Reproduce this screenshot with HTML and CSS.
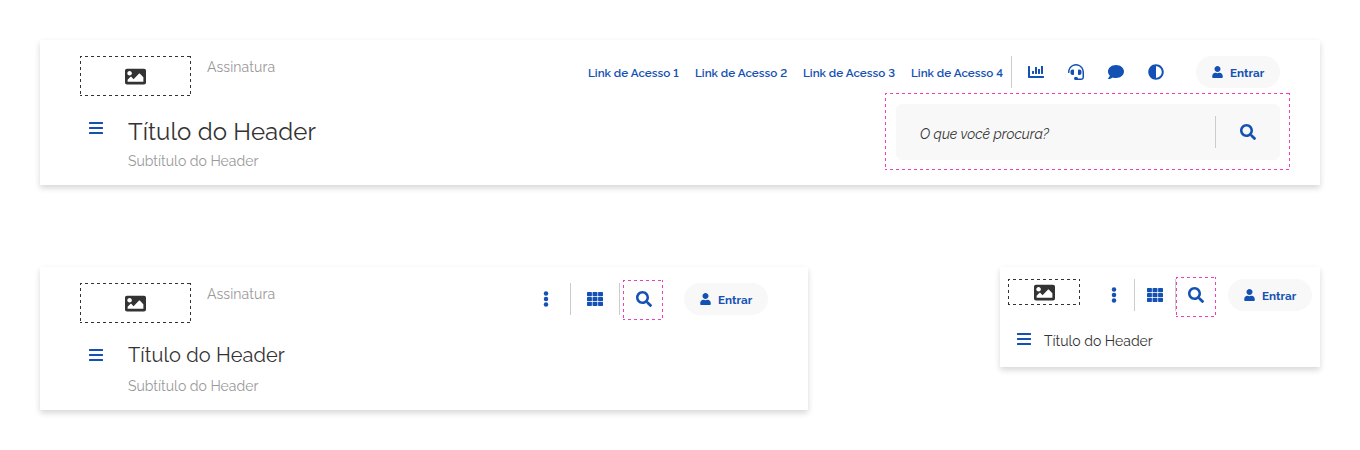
FILE: index.html
```html
<!DOCTYPE html>
<html lang="pt-BR">
<head>
<meta charset="utf-8">
<title>Header</title>
<link rel="stylesheet" href="styles.css">
</head>
<body>
<svg class="sprite" aria-hidden="true">
<symbol id="image" viewBox="0 0 512 512"><path d="M464 448H48c-26.510 0-48-21.490-48-48V112c0-26.510 21.490-48 48-48h416c26.510 0 48 21.490 48 48v288c0 26.510-21.490 48-48 48zM112 120c-30.928 0-56 25.072-56 56s25.072 56 56 56 56-25.072 56-56-25.072-56-56-56zM64 384h384V272l-87.515-87.515c-4.686-4.686-12.284-4.686-16.971 0L208 320l-55.515-55.515c-4.686-4.686-12.284-4.686-16.971 0L64 336v48z"/></symbol>
<symbol id="search" viewBox="0 0 512 512"><path d="M505 442.700L405.300 343c-4.500-4.500-10.600-7-17-7H372c27.600-35.300 44-79.700 44-128C416 93.100 322.900 0 208 0S0 93.100 0 208s93.100 208 208 208c48.300 0 92.700-16.400 128-44v16.300c0 6.400 2.500 12.500 7 17l99.700 99.700c9.400 9.400 24.600 9.400 33.900 0l28.300-28.300c9.400-9.400 9.400-24.600.1-34zM208 336c-70.700 0-128-57.200-128-128 0-70.700 57.200-128 128-128 70.700 0 128 57.200 128 128 0 70.700-57.200 128-128 128z"/></symbol>
<symbol id="user" viewBox="0 0 448 512"><path d="M224 256c70.700 0 128-57.300 128-128S294.700 0 224 0 96 57.300 96 128s57.300 128 128 128zm89.600 32h-16.700c-22.200 10.200-46.900 16-72.900 16s-50.600-5.800-72.900-16h-16.700C60.200 288 0 348.200 0 422.400V464c0 26.500 21.500 48 48 48h352c26.500 0 48-21.500 48-48v-41.600c0-74.200-60.200-134.400-134.400-134.400z"/></symbol>
<symbol id="comment" viewBox="0 0 512 512"><path d="M256 32C114.600 32 0 125.100 0 240c0 49.600 21.400 95 57 130.700C44.500 421.100 2.700 466 2.200 466.500c-2.200 2.300-2.800 5.700-1.500 8.700S4.800 480 8 480c66.300 0 116-31.800 140.600-51.400 32.700 12.300 69 19.400 107.400 19.400 141.400 0 256-93.100 256-208S397.400 32 256 32z"/></symbol>
<symbol id="contrast" viewBox="0 0 512 512"><path d="M8 256c0 136.966 111.033 248 248 248s248-111.034 248-248S392.966 8 256 8 8 119.033 8 256zm248 184V72c101.705 0 184 82.311 184 184 0 101.705-82.311 184-184 184z"/></symbol>
<symbol id="headset" viewBox="0 0 512 512"><path d="M192 208c0-17.670-14.330-32-32-32h-16c-35.350 0-64 28.650-64 64v48c0 35.350 28.650 64 64 64h16c17.670 0 32-14.330 32-32V208zm176 144c35.350 0 64-28.650 64-64v-48c0-35.350-28.650-64-64-64h-16c-17.670 0-32 14.330-32 32v112c0 17.670 14.330 32 32 32h16zM256 0C113.180 0 4.580 118.830 0 256v16c0 8.840 7.160 16 16 16h16c8.840 0 16-7.160 16-16v-16c0-114.690 93.310-208 208-208s208 93.310 208 208h-.12c.08 2.430.12 165.720.12 165.720 0 23.350-18.930 42.280-42.280 42.280H320c0-26.510-21.490-48-48-48h-32c-26.510 0-48 21.490-48 48s21.490 48 48 48h181.720c49.860 0 90.280-40.420 90.280-90.280V256C507.420 118.830 398.820 0 256 0z"/></symbol>
<symbol id="chart" viewBox="0 0 512 512"><path d="M332.800 320h38.400c6.400 0 12.800-6.400 12.800-12.800V172.800c0-6.400-6.400-12.800-12.800-12.800h-38.400c-6.400 0-12.800 6.400-12.800 12.800v134.400c0 6.400 6.400 12.800 12.800 12.800zm96 0h38.400c6.400 0 12.800-6.400 12.800-12.800V76.800c0-6.400-6.400-12.800-12.800-12.800h-38.400c-6.400 0-12.800 6.400-12.800 12.800v230.400c0 6.400 6.400 12.800 12.800 12.800zm-288 0h38.400c6.400 0 12.800-6.400 12.800-12.800v-70.400c0-6.400-6.400-12.800-12.800-12.800h-38.400c-6.400 0-12.800 6.400-12.800 12.800v70.400c0 6.400 6.400 12.800 12.800 12.800zm96 0h38.400c6.400 0 12.800-6.400 12.800-12.800V108.800c0-6.400-6.400-12.800-12.800-12.800h-38.400c-6.400 0-12.800 6.400-12.800 12.800v198.400c0 6.400 6.400 12.800 12.800 12.800zM496 384H64V80c0-8.840-7.160-16-16-16H16C7.160 64 0 71.160 0 80v336c0 17.670 14.330 32 32 32h464c8.840 0 16-7.160 16-16v-32c0-8.840-7.160-16-16-16z"/></symbol>
<symbol id="bars" viewBox="0 0 16 16"><path d="M1.500 2h13q.5 0 .5.500v1.100q0 .5-.5.500h-13q-.5 0-.5-.5v-1.100q0-.5.500-.5zm0 5h13q.5 0 .5.500v1.100q0 .5-.5.500h-13q-.5 0-.5-.5V7.500q0-.5.500-.5zm0 5h13q.5 0 .5.500v1.100q0 .5-.5.500h-13q-.5 0-.5-.5v-1.100q0-.5.500-.5z"/></symbol>
<symbol id="dots" viewBox="0 0 16 16"><circle cx="8" cy="2.500" r="2.250"/><circle cx="8" cy="8" r="2.250"/><circle cx="8" cy="13.500" r="2.250"/></symbol>
<symbol id="grid" viewBox="0 0 16 16"><g id="grid-row"><rect x="0" y="1" width="4.900" height="4.200" rx=".7"/><rect x="5.550" y="1" width="4.900" height="4.200" rx=".7"/><rect x="11.100" y="1" width="4.900" height="4.200" rx=".7"/></g><use href="#grid-row" y="4.900"/><use href="#grid-row" y="9.800"/></symbol>
</svg>

<header class="card desktop">
  <div class="brand">
    <div class="brand-top"><div class="logo dashed"><svg class="picture"><use href="#image"/></svg></div><span class="sign">Assinatura</span></div>
    <div class="heading"><button class="menu"><svg class="icon"><use href="#bars"/></svg></button>
      <div><div class="title large">Título do Header</div><div class="subtitle">Subtítulo do Header</div></div></div>
  </div>
  <div class="tools">
    <div class="actions">
      <nav class="links"><a>Link de Acesso 1</a><a>Link de Acesso 2</a><a>Link de Acesso 3</a><a>Link de Acesso 4</a></nav>
      <span class="divider"></span>
      <div class="functions"><svg class="icon"><use href="#chart"/></svg><svg class="icon"><use href="#headset"/></svg><svg class="icon"><use href="#comment"/></svg><svg class="icon"><use href="#contrast"/></svg></div>
      <button class="login"><svg class="person"><use href="#user"/></svg><span>Entrar</span></button>
    </div>
    <div class="search-frame dashed"><div class="search"><span class="placeholder">O que você procura?</span><span class="divider"></span><svg class="icon"><use href="#search"/></svg></div></div>
  </div>
</header>

<div class="row">
  <header class="card tablet">
    <div class="brand">
      <div class="brand-top"><div class="logo dashed"><svg class="picture"><use href="#image"/></svg></div><span class="sign">Assinatura</span></div>
      <div class="heading"><button class="menu"><svg class="icon"><use href="#bars"/></svg></button>
        <div><div class="title medium">Título do Header</div><div class="subtitle">Subtítulo do Header</div></div></div>
    </div>
    <div class="actions">
      <svg class="icon"><use href="#dots"/></svg><span class="divider"></span><svg class="icon"><use href="#grid"/></svg><span class="divider"></span>
      <button class="search-toggle dashed"><svg class="icon"><use href="#search"/></svg></button>
      <button class="login"><svg class="person"><use href="#user"/></svg><span>Entrar</span></button>
    </div>
  </header>

  <header class="card mobile">
    <div class="mobile-top">
      <div class="logo small dashed"><svg class="picture"><use href="#image"/></svg></div>
      <div class="actions">
        <svg class="icon"><use href="#dots"/></svg><span class="divider"></span><svg class="icon"><use href="#grid"/></svg><span class="divider"></span>
        <button class="search-toggle dashed"><svg class="icon"><use href="#search"/></svg></button>
        <button class="login"><svg class="person"><use href="#user"/></svg><span>Entrar</span></button>
      </div>
    </div>
    <div class="heading"><button class="menu"><svg class="icon"><use href="#bars"/></svg></button><div class="title tiny">Título do Header</div></div>
  </header>
</div>
</body>
</html>
```
FILE: styles.css
```css
* { box-sizing: border-box; }
body { margin: 0; padding: 40px; width: 1360px; height: 450px; overflow: hidden; background: #fff; color: #333; font-family: Raleway, Lato, sans-serif; font-variant-numeric: lining-nums; }
button { border: 0; padding: 0; margin: 0; background: none; color: inherit; font: inherit; }
svg { display: block; flex: none; fill: currentColor; }
.sprite { position: absolute; width: 0; height: 0; }
.icon { width: 16px; height: 16px; color: #1351b4; }
.picture { width: 21px; height: 21px; }
.person { width: 11px; height: 12px; margin-bottom: 1px; }
.dashed {
  --dash: #333;
  --across: linear-gradient(90deg, var(--dash) 50%, transparent 50%);
  --down: linear-gradient(180deg, var(--dash) 50%, transparent 50%);
  background-image: var(--across), var(--across), var(--down), var(--down);
  background-size: 6px 1px, 6px 1px, 1px 6px, 1px 6px;
  background-position: -1px 0, -1px 100%, 0 -1px, 100% -1px;
  background-repeat: repeat-x, repeat-x, repeat-y, repeat-y;
}
.card { display: flex; justify-content: space-between; background: #fff; box-shadow: 0 3px 6px rgba(0, 0, 0, .16); }
.desktop { height: 145px; padding: 16px 40px; }
.row { display: flex; justify-content: space-between; align-items: flex-start; margin-top: 82px; }
.tablet { width: 768px; height: 143px; padding: 16px 40px; }
.mobile { width: 320px; height: 100px; padding: 12px 8px; flex-direction: column; justify-content: flex-start; }
.brand-top { display: flex; gap: 16px; }
.logo { display: flex; align-items: center; justify-content: center; width: 111px; height: 40px; }
.logo.small { width: 72px; height: 26px; }
.sign { margin-top: 2px; color: #999; font-size: 14px; line-height: 18px; letter-spacing: .1px; }
.heading { display: flex; padding-left: 8px; }
.menu { width: 16px; height: 16px; margin-right: 24px; }
.title { white-space: nowrap; }
.large { font-size: 24px; line-height: 30px; letter-spacing: .1px; }
.medium { font-size: 20px; line-height: 26px; letter-spacing: .1px; }
.tiny { font-size: 14px; line-height: 18px; }
.subtitle { color: #999; font-size: 14px; line-height: 18px; }
.desktop .heading { padding-top: 21px; }
.desktop .menu { margin-top: 3px; }
.desktop .subtitle { margin-top: 5px; }
.tablet .heading { padding-top: 19px; }
.tablet .menu { margin-top: 5px; }
.tablet .subtitle { margin-top: 9px; }
.tools { display: flex; flex-direction: column; align-items: flex-end; }
.actions { display: flex; align-items: center; height: 32px; }
.divider { flex: none; width: 1px; height: 32px; background: #ccc; }
.links { display: flex; gap: 16px; margin-right: 8px; padding-top: 2px; color: #1351b4; font-size: 11.66px; line-height: 16px; font-weight: 600; }
.links a { width: 92px; white-space: nowrap; }
.links a:first-child { width: 91px; }
.functions { display: flex; gap: 24px; margin: 0 32px 0 16px; }
.login { display: flex; align-items: center; width: 84px; height: 32px; padding: 1px 0 0 16px; gap: 7px; border-radius: 16px; background: #f8f8f8; color: #1351b4; font-size: 11.66px; line-height: 16px; font-weight: 700; }
.search-frame { --dash: #f43cb4; display: flex; width: 405px; height: 77px; margin: 5px -10px 0 0; padding: 11px 10px 10px 11px; }
.search { display: flex; align-items: center; width: 384px; height: 56px; padding: 0 24px; border-radius: 6px; background: #f8f8f8; }
.placeholder { flex: 1; padding-top: 3px; font-size: 14px; font-style: italic; line-height: 18px; }
.search .icon { margin-left: 24px; }
.search-toggle { --dash: #f43cb4; display: flex; align-items: center; justify-content: center; width: 40px; height: 40px; padding: 0 0 3px 1px; }
.tablet .actions > .icon, .mobile .actions > .icon { margin-right: 16px; }
.tablet .actions > .divider + .icon { margin-left: 16px; }
.tablet .search-toggle { margin: 2px 21px 0 3px; padding-left: 2px; }
.mobile-top { display: flex; justify-content: space-between; }
.mobile .actions > .icon:first-child { margin-right: 12px; }
.mobile .actions > .divider + .icon { margin: 0 12px; }
.mobile .search-toggle { margin: 4px 12px 0 0; padding: 0 0 4px; }
.mobile .heading { margin-top: 20px; padding-left: 8px; }
.mobile .tiny { margin-top: 1px; }
.mobile .menu { margin-right: 12px; }
```
